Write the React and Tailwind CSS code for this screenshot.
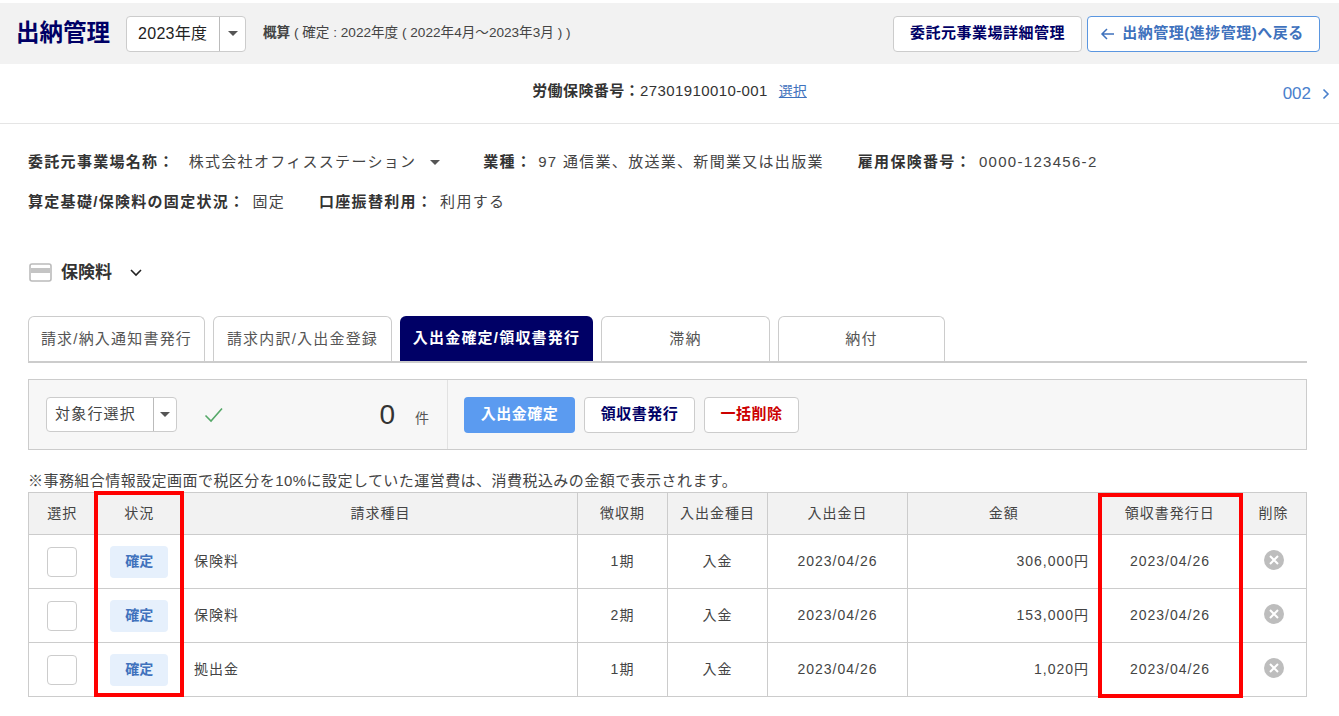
import React from "react";

const rows = [
  ["保険料", "1期", "306,000円"],
  ["保険料", "2期", "153,000円"],
  ["拠出金", "1期", "1,020円"],
];

function Caret() {
  return <span className="inline-block w-0 h-0 border-x-[5px] border-x-transparent border-t-[5px] border-t-[#555]" />;
}

function Select({ label, w, cw, h, cls }) {
  return (
    <div className={`flex items-stretch bg-white border border-[#ccc] rounded ${w} ${h}`}>
      <div className={`flex-1 flex items-center ${cls}`}>{label}</div>
      <div className={`${cw} border-l border-[#bbb] flex items-center justify-center`}><Caret /></div>
    </div>
  );
}

function Tab({ label, w, active }) {
  return (
    <div className={`${w} h-[45px] rounded-t-md flex items-center justify-center text-[15px] tracking-[1.2px] ${active ? "bg-[#000066] text-white font-bold" : "bg-white border border-b-0 border-[#ccc] text-[#555]"}`}>
      {label}
    </div>
  );
}

export default function App() {
  return (
    <div className="relative w-[1339px] h-[716px] overflow-hidden bg-white text-[#333] font-['Liberation_Sans','Noto_Sans_CJK_JP',sans-serif]">
      <div className="h-[3px]" />
      <header className="h-[61px] bg-[#f2f2f2] flex items-center pl-4 pr-[19px]">
        <h1 className="text-[23.5px] font-bold text-[#000066] w-[110px]">出納管理</h1>
        <Select label="2023年度" w="w-[120px]" cw="w-[26px]" h="h-[36px]" cls="pl-[11px] text-[16px] tracking-[0.3px] text-[#222]" />
        <div className="ml-[17px] text-[13.6px] text-[#444]"><b>概算</b> ( 確定 : 2022年度 ( 2022年4月～2023年3月 ) )</div>
        <div className="ml-auto flex gap-[5px]">
          <button className="w-[189px] h-[36px] bg-white border border-[#ccc] rounded text-[15px] tracking-[0.5px] font-bold text-[#000066]">委託元事業場詳細管理</button>
          <button className="w-[233px] h-[36px] bg-white border border-[#5a96e0] rounded text-[15px] tracking-[0.5px] font-bold text-[#3f72bd] flex items-center justify-center gap-[7px] pr-[3px]">
            <svg width="15" height="14" viewBox="0 0 15 14" fill="none" stroke="#3f72bd" strokeWidth="1.5"><path d="M14 7H2M7 2 2 7l5 5" /></svg>
            出納管理(進捗管理)へ戻る
          </button>
        </div>
      </header>

      <div className="relative h-[60px] border-b border-[#e5e5e5] flex items-center justify-center text-[15px] tracking-[0.4px] text-[#333] pb-1">
        <b className="text-[#333]">労働保険番号：</b>
        <span>27301910010-001</span>
        <a className="ml-[11px] text-[14px] tracking-normal text-[#3f72bd] underline">選択</a>
        <div className="absolute right-[9px] top-[17px] flex items-center gap-[11px] text-[#4a80cc] text-[17px] tracking-normal">
          002
          <svg width="8" height="12" viewBox="0 0 8 12" fill="none" stroke="#4a80cc" strokeWidth="1.6"><path d="m1.5 1.5 4.5 4.5-4.5 4.5" /></svg>
        </div>
      </div>

      <main className="pl-[28px] pr-[32px]">
        <div className="flex items-center h-[40px] mt-[18px] text-[15px] tracking-[1.3px] text-[#444]">
          <b className="text-[#333]">委託元事業場名称：</b>
          <span className="ml-[14px]">株式会社オフィスステーション</span>
          <span className="ml-[14px] flex items-center"><Caret /></span>
          <b className="ml-[43px] text-[#333]">業種：</b>
          <span className="ml-[6px]">97 通信業、放送業、新聞業又は出版業</span>
          <b className="ml-[34px] text-[#333]">雇用保険番号：</b>
          <span className="ml-[7px]">0000-123456-2</span>
        </div>
        <div className="flex items-center h-[41px] text-[15px] tracking-[1.3px] text-[#444]">
          <b className="text-[#333]">算定基礎/保険料の固定状況：</b>
          <span className="ml-[7px]">固定</span>
          <b className="ml-[34px] text-[#333]">口座振替利用：</b>
          <span className="ml-[7px]">利用する</span>
        </div>

        <div className="flex items-center h-[30px] mt-[35px]">
          <svg width="24" height="20" viewBox="0 0 24 20" className="mr-[8px] ml-[1px]">
            <rect x="1" y="1" width="21" height="17" rx="2" fill="#fff" stroke="#bbb" strokeWidth="1.6" />
            <rect x="2" y="5" width="19" height="5" fill="#c4c4c4" />
          </svg>
          <b className="text-[17px] text-[#333]">保険料</b>
          <svg width="14" height="10" viewBox="0 0 14 10" fill="none" stroke="#222" strokeWidth="1.6" className="ml-[17px]"><path d="m2 2 5 5 5-5" /></svg>
        </div>

        <nav className="flex gap-[8px] mt-[28px] border-b-2 border-[#ccc] h-[47px]">
          <Tab label="請求/納入通知書発行" w="w-[177px]" />
          <Tab label="請求内訳/入出金登録" w="w-[179px]" />
          <Tab label="入出金確定/領収書発行" w="w-[193px]" active />
          <Tab label="滞納" w="w-[169px]" />
          <Tab label="納付" w="w-[167px]" />
        </nav>

        <section className="mt-[16px] h-[71px] bg-[#f7f7f7] border border-[#ccc] flex items-center">
          <div className="w-[419px] h-full border-r border-[#e2e2e2] flex items-center pl-[17px]">
            <Select label="対象行選択" w="w-[131px]" cw="w-[23px]" h="h-[35px]" cls="pl-[8px] text-[15px] tracking-[1.2px] text-[#444]" />
            <svg width="20" height="16" viewBox="0 0 20 16" fill="none" stroke="#55a868" strokeWidth="1.6" className="ml-[27px]"><path d="m1.5 8.5 5.5 5.5L18 1.5" /></svg>
            <span className="ml-auto text-[28px] text-[#333] leading-none">0</span>
            <span className="ml-[20px] mr-[18px] mt-2 text-[14px] text-[#555]">件</span>
          </div>
          <div className="flex items-center pl-[16px] gap-[9px]">
            <button className="w-[111px] h-[36px] rounded bg-[#5b9bf0] text-white text-[15px] tracking-[0.5px] font-bold">入出金確定</button>
            <button className="w-[111px] h-[36px] rounded bg-white border border-[#ccc] text-[#000066] text-[15px] tracking-[0.5px] font-bold">領収書発行</button>
            <button className="w-[95px] h-[36px] rounded bg-white border border-[#ccc] text-[#cc0000] text-[15px] tracking-[0.5px] font-bold">一括削除</button>
          </div>
        </section>

        <p className="mt-[20px] h-[22px] text-[15px] tracking-[0.45px] text-[#444]">※事務組合情報設定画面で税区分を10%に設定していた運営費は、消費税込みの金額で表示されます。</p>

        <table className="w-[1279px] table-fixed border-collapse border border-[#ccc] text-[14px] tracking-[1px] text-[#444]">
          <colgroup>
            <col className="w-[67px]" />
            <col className="w-[88px]" />
            <col className="w-[394px]" />
            <col className="w-[90px]" />
            <col className="w-[100px]" />
            <col className="w-[140px]" />
            <col className="w-[192px]" />
            <col className="w-[141px]" />
            <col />
          </colgroup>
          <thead>
            <tr className="h-[42px] bg-[#f2f2f2]">
              {["選択", "状況", "請求種目", "徴収期", "入出金種目", "入出金日", "金額", "領収書発行日", "削除"].map((h, i) => (
                <th key={h} className={`font-normal ${i === 0 || i === 1 || i === 7 ? "" : "border-l border-[#ccc]"}`}>{h}</th>
              ))}
            </tr>
          </thead>
          <tbody>
            {rows.map((r, i) => (
              <tr key={i} className="h-[54px] border-t border-[#ccc]">
                <td className="text-center"><span className="inline-block align-middle w-[30px] h-[30px] bg-white border border-[#ccc] rounded" /></td>
                <td className="text-center"><span className="inline-flex w-[58px] h-[32px] items-center justify-center rounded bg-[#e6f0fc] text-[#3f72bd] font-bold text-[14px] tracking-normal align-middle">確定</span></td>
                <td className="border-l border-[#ccc] pl-[10px]">{r[0]}</td>
                <td className="border-l border-[#ccc] text-center">{r[1]}</td>
                <td className="border-l border-[#ccc] text-center">入金</td>
                <td className="border-l border-[#ccc] text-center">2023/04/26</td>
                <td className="border-l border-[#ccc] text-right pr-[10px]">{r[2]}</td>
                <td className="border-l border-[#ccc] text-center">2023/04/26</td>
                <td className="border-l border-[#ccc] text-center">
                  <svg width="20" height="20" viewBox="0 0 20 20" className="inline-block -mt-[4px]">
                    <circle cx="10" cy="10" r="10" fill="#bdbdbd" />
                    <path d="m6 6 8 8M14 6l-8 8" stroke="#fff" strokeWidth="2" />
                  </svg>
                </td>
              </tr>
            ))}
          </tbody>
        </table>
      </main>

      <div className="absolute left-[94px] top-[491px] w-[90px] h-[206px] border-[4px] border-[#ff0000] pointer-events-none" />
      <div className="absolute left-[1098px] top-[493px] w-[145px] h-[205px] border-[4px] border-[#ff0000] pointer-events-none" />
    </div>
  );
}
